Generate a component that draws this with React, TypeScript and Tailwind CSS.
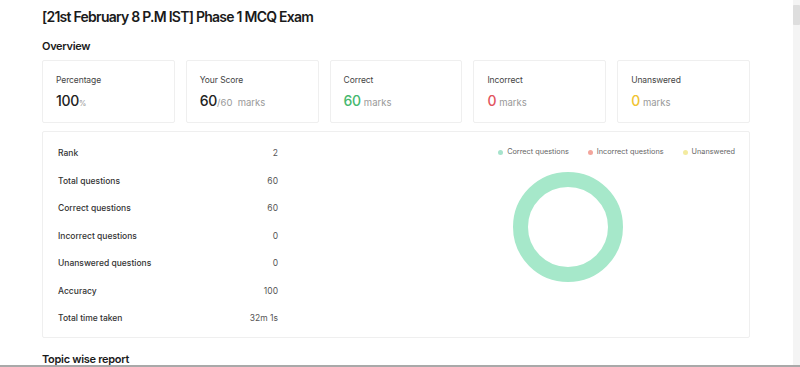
const cards = [
  { label: 'Percentage', value: '100', suffix: '%', color: 'text-[#222]', gap: 'text-[7.5px]' },
  { label: 'Your Score', value: '60', suffix: '/60  marks', color: 'text-[#222]', gap: 'text-[9.5px]' },
  { label: 'Correct', value: '60', suffix: 'marks', color: 'text-[#45b86e]', gap: 'ml-[3px] text-[9.5px]' },
  { label: 'Incorrect', value: '0', suffix: 'marks', color: 'text-[#e2545e]', gap: 'ml-[3px] text-[9.5px]' },
  { label: 'Unanswered', value: '0', suffix: 'marks', color: 'text-[#f0c330]', gap: 'ml-[3px] text-[9.5px]' },
];

const stats = [
  ['Rank', '2'],
  ['Total questions', '60'],
  ['Correct questions', '60'],
  ['Incorrect questions', '0'],
  ['Unanswered questions', '0'],
  ['Accuracy', '100'],
  ['Total time taken', '32m 1s'],
];

const legend = [
  { label: 'Correct questions', dot: 'bg-[#a6e3cc]' },
  { label: 'Incorrect questions', dot: 'bg-[#f3a59c]' },
  { label: 'Unanswered', dot: 'bg-[#f3eba0]' },
];

export default function App() {
  return (
    <div className="relative flex h-[367px] w-[800px] overflow-hidden bg-white font-['Inter',sans-serif] text-[#222]">
      <main className="flex-1 pl-[42px] pr-[43px] pt-[7px]">
        <h1 className="text-[14px] font-semibold leading-[20px] tracking-[-0.75px] text-[#1a1a1a]">
          [21st February 8 P.M IST] Phase 1 MCQ Exam
        </h1>
        <h2 className="mt-[11px] text-[11px] font-semibold leading-[16px] tracking-[-0.3px] text-[#1a1a1a]">Overview</h2>

        <div className="mt-[6px] grid grid-cols-5 gap-[11px]">
          {cards.map((c) => (
            <div key={c.label} className="h-[63px] rounded-[2px] border border-[#efefef] pl-[13px] pt-[13px]">
              <div className="text-[8.5px] leading-[12px] tracking-[-0.1px] text-[#444]">{c.label}</div>
              <div className="mt-[6px] flex items-baseline whitespace-pre leading-[18px]">
                <span className={`text-[14px] font-medium tracking-[-0.3px] ${c.color}`}>{c.value}</span>
                <span className={`${c.gap} text-[#999]`}>{c.suffix}</span>
              </div>
            </div>
          ))}
        </div>

        <div className="mt-[8px] flex h-[207px] rounded-[2px] border border-[#efefef]">
          <div className="w-[235px] pl-[15px] pt-[15px]">
            {stats.map(([k, v]) => (
              <div key={k} className="flex h-[27.5px] items-start justify-between text-[8.5px] leading-[12px]">
                <span className="font-medium text-[#333]">{k}</span>
                <span className="text-[#555]">{v}</span>
              </div>
            ))}
          </div>
          <div className="flex flex-1 flex-col">
            <div className="mt-[14px] flex justify-end gap-[19px] pr-[14px]">
              {legend.map((l) => (
                <div key={l.label} className="flex items-center gap-[4px] text-[7.3px] leading-[12px] text-[#666]">
                  <span className={`h-[5px] w-[5px] rounded-full ${l.dot}`} />
                  {l.label}
                </div>
              ))}
            </div>
            <div className="ml-[235px] mt-[14px] h-[110px] w-[110px] rounded-full border-[15px] border-[#a6e8ca]" />
          </div>
        </div>

        <h2 className="mt-[13px] text-[11px] font-semibold leading-[16px] tracking-[-0.3px] text-[#1a1a1a]">Topic wise report</h2>
      </main>

      <div className="w-[7px] bg-[#f4f4f4] pt-[5px]">
        <div className="h-[20px] w-full rounded-[1px] bg-[#dedede]" />
      </div>

      <div className="absolute bottom-0 left-0 h-[2px] w-full bg-[#a9a9a9]" />
    </div>
  );
}
